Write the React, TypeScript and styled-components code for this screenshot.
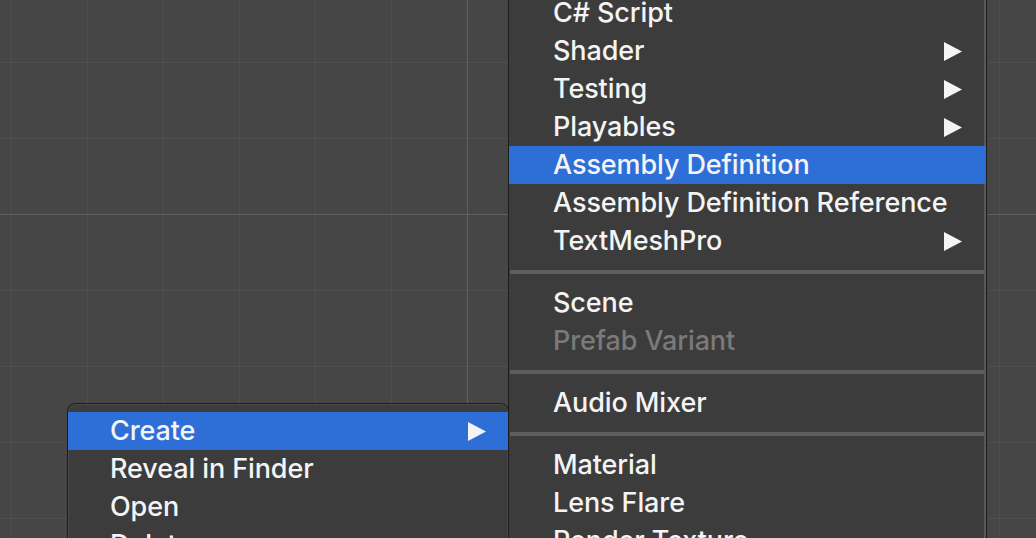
import React from "react";
import styled, { createGlobalStyle } from "styled-components";

const Global = createGlobalStyle`
  html, body { margin: 0; padding: 0; background: #464646; }
  #root { width: 1036px; height: 538px; }
`;

const Canvas = styled.div`
  position: relative;
  width: 1036px;
  height: 538px;
  overflow: hidden;
  background-color: #464646;
  background-image:
    linear-gradient(to right, transparent 467px, #606060 467px, #606060 468px, transparent 468px),
    linear-gradient(to bottom, transparent 214px, #606060 214px, #606060 215px, transparent 215px),
    linear-gradient(to right, #4f4f4f 1px, transparent 1px),
    linear-gradient(to bottom, #4f4f4f 1px, transparent 1px);
  background-size: 100% 100%, 100% 100%, 76px 76px, 76px 76px;
  background-repeat: no-repeat, no-repeat, repeat, repeat;
  background-position: 0 0, 0 0, 11px 62px, 11px 62px;
  font-family: Inter, "Noto Sans", "Liberation Sans", sans-serif;
`;

const ContextMenu = styled.div`
  position: absolute;
  left: 67px;
  top: 403px;
  width: 440px;
  padding: 8px 0;
  background: #3c3c3c;
  border: 1px solid #1c1c1c;
  border-radius: 8px;
  box-shadow: inset 0 0 0 1px #4a4a4a;
  overflow: hidden;
`;

const SubMenu = styled.div`
  position: absolute;
  left: 508px;
  top: -6px;
  width: 477px;
  background: #3c3c3c;
  border-left: 1px solid #1c1c1c;
  border-right: 1px solid #1c1c1c;
  box-shadow: inset -2px 0 0 #595959;
  z-index: 2;
`;

const Item = styled.div<{ $active?: boolean; $disabled?: boolean; $indent: number; $arrowGap: number }>`
  display: flex;
  align-items: center;
  justify-content: space-between;
  box-sizing: border-box;
  height: 38px;
  padding: 0 ${(p) => p.$arrowGap}px 1px ${(p) => p.$indent}px;
  background: ${(p) => (p.$active ? "#2e6ed7" : "transparent")};
  color: ${(p) => (p.$disabled ? "#7a7a7a" : "#f4f4f4")};
  font-size: 27px;
  font-weight: 500;
  letter-spacing: -0.1px;
  line-height: 37px;
  white-space: nowrap;
`;

const Label = styled.span`
  display: block;
`;

const ArrowBox = styled.span`
  display: flex;
  padding-top: 1px;
`;

const Separator = styled.div`
  height: 4px;
  margin: 10px 2px 10px 1px;
  background: #5e5e5e;
`;

const Arrow = () => (
  <ArrowBox>
    <svg width="18" height="19" viewBox="0 0 18 19">
      <polygon points="0,0 18,9.5 0,19" fill="#f4f4f4" />
    </svg>
  </ArrowBox>
);

type Entry =
  | { kind: "item"; label: string; arrow?: boolean; active?: boolean; disabled?: boolean }
  | { kind: "sep" };

const subEntries: Entry[] = [
  { kind: "item", label: "C# Script" },
  { kind: "item", label: "Shader", arrow: true },
  { kind: "item", label: "Testing", arrow: true },
  { kind: "item", label: "Playables", arrow: true },
  { kind: "item", label: "Assembly Definition", active: true },
  { kind: "item", label: "Assembly Definition Reference" },
  { kind: "item", label: "TextMeshPro", arrow: true },
  { kind: "sep" },
  { kind: "item", label: "Scene" },
  { kind: "item", label: "Prefab Variant", disabled: true },
  { kind: "sep" },
  { kind: "item", label: "Audio Mixer" },
  { kind: "sep" },
  { kind: "item", label: "Material" },
  { kind: "item", label: "Lens Flare" },
  { kind: "item", label: "Render Texture" },
];

const contextEntries: Entry[] = [
  { kind: "item", label: "Create", arrow: true, active: true },
  { kind: "item", label: "Reveal in Finder" },
  { kind: "item", label: "Open" },
  { kind: "item", label: "Delete" },
  { kind: "item", label: "Rename" },
];

const renderEntries = (entries: Entry[], indent: number, gap: number) =>
  entries.map((e, i) =>
    e.kind === "sep" ? (
      <Separator key={i} />
    ) : (
      <Item key={i} $active={e.active} $disabled={e.disabled} $indent={indent} $arrowGap={gap}>
        <Label>{e.label}</Label>
        {e.arrow && <Arrow />}
      </Item>
    )
  );

export default function App() {
  return (
    <>
      <Global />
      <Canvas>
        <ContextMenu>{renderEntries(contextEntries, 42, 22)}</ContextMenu>
        <SubMenu>{renderEntries(subEntries, 44, 24)}</SubMenu>
      </Canvas>
    </>
  );
}
